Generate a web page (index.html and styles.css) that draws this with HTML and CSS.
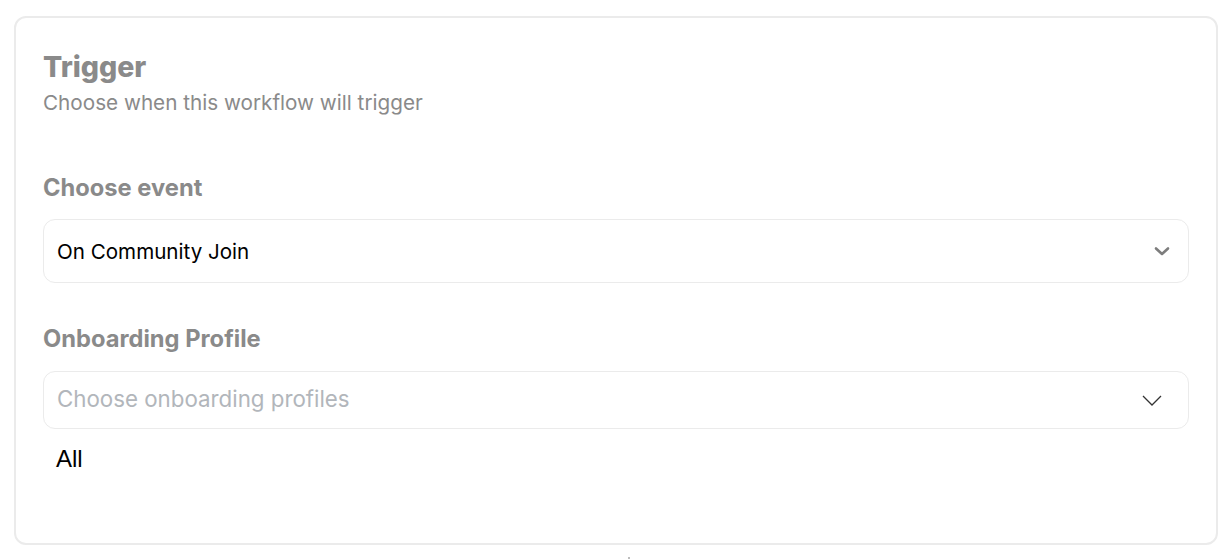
FILE: index.html
```html
<!DOCTYPE html>
<html>
<head>
<meta charset="utf-8">
<link rel="stylesheet" href="styles.css">
</head>
<body>
<div class="card">
  <h1 class="title">Trigger</h1>
  <p class="subtitle">Choose when this workflow will trigger</p>

  <div class="field field-event">
    <div class="label">Choose event</div>
    <div class="select select-event">
      <span class="value">On Community Join</span>
      <svg class="chev-bold" width="18" height="12" viewBox="0 0 18 12"><path d="M3 3.5 L9 9 L15 3.5" fill="none" stroke="#7d7d7d" stroke-width="2.6" stroke-linecap="round" stroke-linejoin="round"/></svg>
    </div>
  </div>

  <div class="field field-profile">
    <div class="label">Onboarding Profile</div>
    <div class="select select-profile">
      <span class="placeholder">Choose onboarding profiles</span>
      <svg class="chev-thin" width="22" height="14" viewBox="0 0 22 14"><path d="M2 3 L11 12 L20 3" fill="none" stroke="#333" stroke-width="1.3"/></svg>
    </div>
    <div class="option">All</div>
  </div>
</div>
<div class="dot"></div>
</body>
</html>
```
FILE: styles.css
```css
html, body {
  margin: 0;
  background: #fff;
}
body {
  padding: 16px 8px 0 14px;
  font-family: Inter, "Noto Sans", sans-serif;
}
.card {
  height: 529px;
  box-sizing: border-box;
  border: 2px solid #ebebeb;
  border-radius: 12px;
  padding: 31px 27px 0 27px;
}
.title {
  margin: 0;
  font-size: 28.5px;
  font-weight: 800;
  color: #8a8a8a;
  line-height: 36px;
}
.subtitle {
  margin: 4px 0 0 0;
  font-size: 20.7px;
  color: #8a8a8a;
  line-height: 28px;
}
.field-event {
  margin-top: 56px;
}
.field-profile {
  margin-top: 41px;
}
.label {
  font-size: 23.7px;
  font-weight: 700;
  color: #8a8a8a;
  line-height: 30px;
}
.select {
  display: flex;
  align-items: center;
  justify-content: space-between;
  border: 1px solid #ebebeb;
  border-radius: 12px;
  box-sizing: border-box;
  padding: 0 17px 0 13px;
}
.select-event {
  margin-top: 16px;
  height: 64px;
}
.select-profile {
  margin-top: 17px;
  height: 58px;
  padding-right: 25px;
}
.value {
  font-size: 20.6px;
  color: #000;
}
.placeholder {
  font-size: 22.3px;
  color: #b2b6bb;
  line-height: 26px;
  margin-top: -2px;
}
.option {
  padding-left: 13px;
  margin-top: 14px;
  font-family: "Liberation Sans", Arial, sans-serif;
  font-size: 24px;
  color: #000;
  line-height: 32px;
}
.dot {
  margin: 12px 0 0 614px;
  width: 2px;
  height: 2px;
  background: #bdbdbd;
}
```
